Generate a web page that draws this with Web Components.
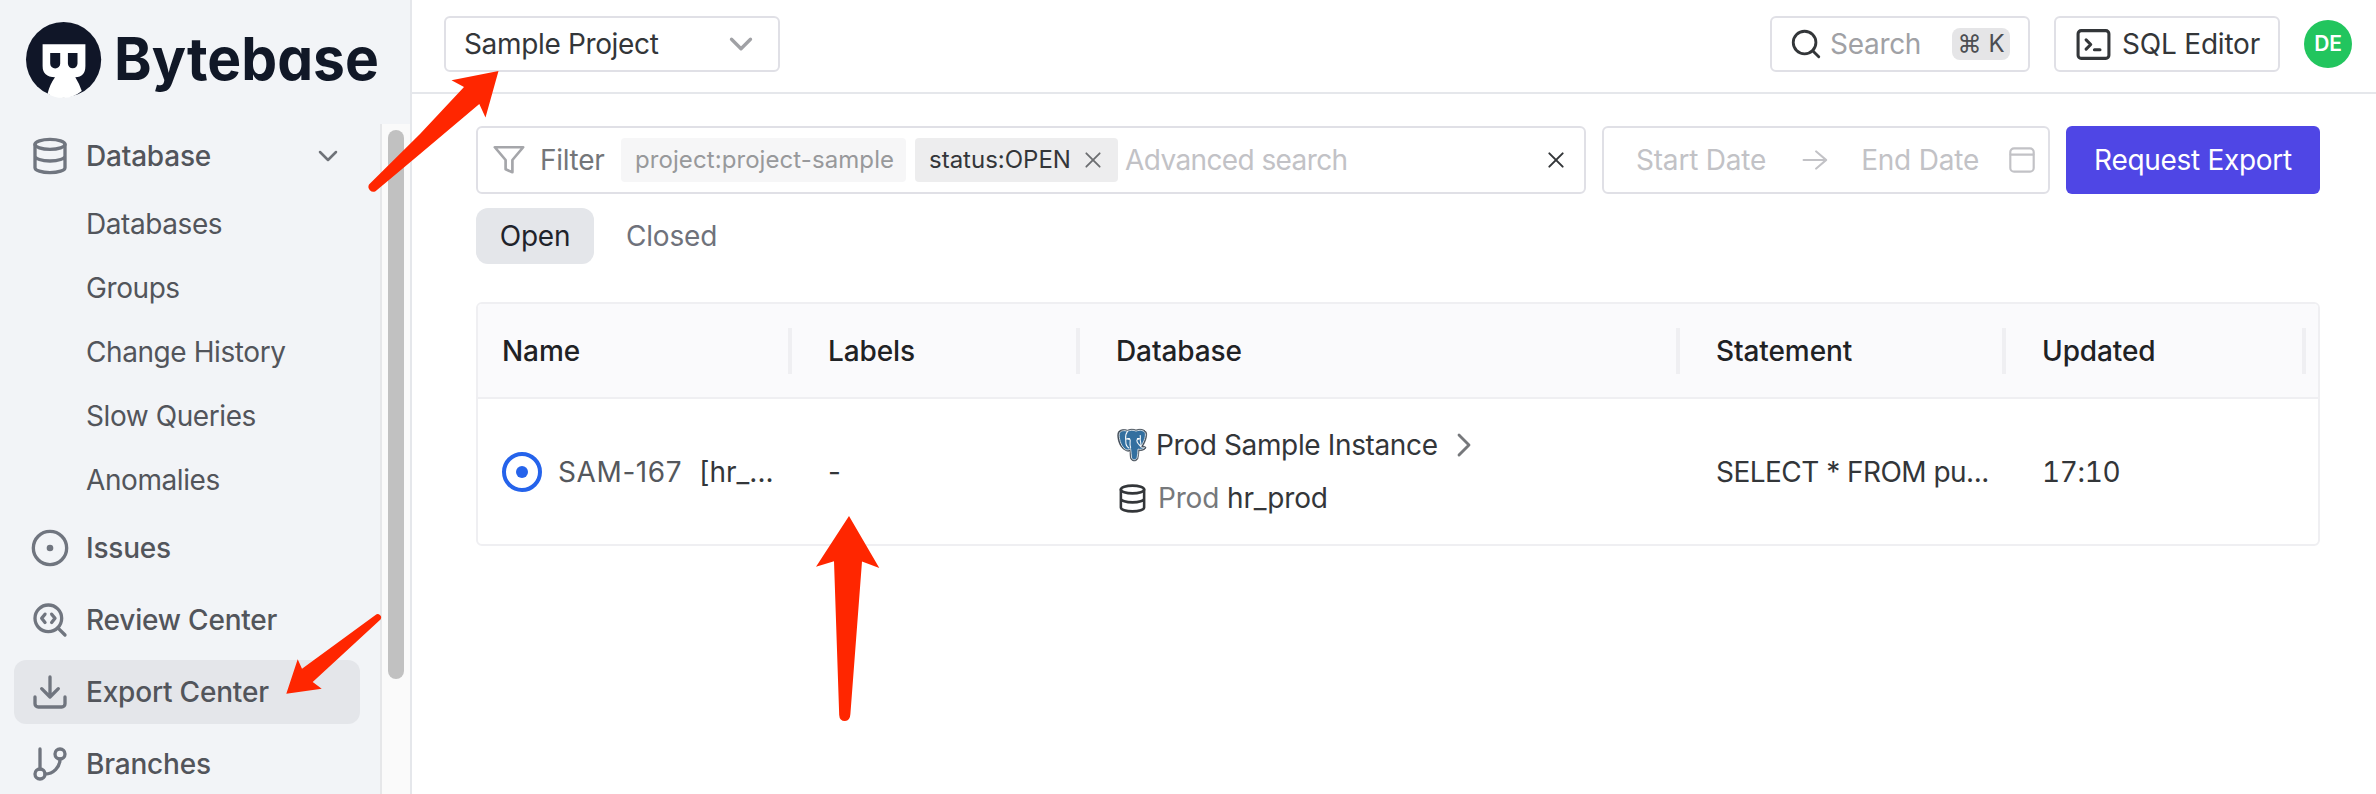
<!DOCTYPE html>
<html lang="en">
<head>
<meta charset="utf-8">
<title>Export Center</title>
<style>
html,body{margin:0;height:100%;overflow:hidden;background:#fff}
body{font-family:Inter,"Liberation Sans",sans-serif;font-size:28px;line-height:40px;color:#333639;letter-spacing:-.2px}
</style>
</head>
<body>
<bb-app></bb-app>
<script>
const define = (name, css, html) => customElements.define(name, class extends HTMLElement {
  connectedCallback() {
    if (this.shadowRoot) return;
    const t = document.createElement('template');
    t.innerHTML = `<style>*{box-sizing:border-box}:host{box-sizing:border-box}${css}</style>${typeof html === 'function' ? html(this) : html}`;
    this.attachShadow({ mode: 'open' }).append(t.content.cloneNode(true));
  }
});

const ICONS = {
  database: '<ellipse cx="12" cy="5" rx="9" ry="3"/><path d="M3 5v14a9 3 0 0 0 18 0V5M3 12a9 3 0 0 0 18 0"/>',
  down: '<path d="m6 9 6 6 6-6"/>',
  right: '<path d="m9 18 6-6-6-6"/>',
  issue: '<circle cx="12" cy="12" r="10"/><circle cx="12" cy="12" r="1"/>',
  review: '<path d="m13 13.5 2-2.5-2-2.5M21 21l-4.3-4.3M9 8.5 7 11l2 2.5"/><circle cx="11" cy="11" r="8"/>',
  download: '<path d="M21 15v4a2 2 0 0 1-2 2H5a2 2 0 0 1-2-2v-4M7 10l5 5 5-5M12 15V3"/>',
  branch: '<path d="M6 3v12"/><circle cx="18" cy="6" r="3"/><circle cx="6" cy="18" r="3"/><path d="M18 9a9 9 0 0 1-9 9"/>',
  search: '<circle cx="11" cy="11" r="8"/><path d="m21 21-4.3-4.3"/>',
  terminal: '<rect x="2" y="3" width="20" height="18" rx="2"/><path d="m7.2 9 3 3-3 3M12.6 15.4h3.6"/>',
  funnel: '<path d="M2 3h20l-7.6 9v8.6l-4.8-2V12z"/>',
  close: '<path d="M4 4l16 16M20 4L4 20"/>',
  arrow: '<path d="M1.5 12h20.5M13 2.5 22.3 12 13 21.5"/>',
  calendar: '<rect x="1.2" y="1.2" width="21.6" height="21.6" rx="3.5"/><path d="M1.5 7h21"/>'
};
define('bb-icon', `:host{display:block;flex:none}svg{display:block;fill:none;stroke:currentColor;stroke-linecap:round;stroke-linejoin:round}`,
  el => `<svg width="${el.getAttribute('w')}" height="${el.getAttribute('h') || el.getAttribute('w')}" viewBox="0 0 24 24" preserveAspectRatio="none" stroke-width="${el.getAttribute('sw') || 2}">${ICONS[el.getAttribute('name')]}</svg>`);

define('bb-logo', `
:host{display:flex;align-items:center;height:124px;padding:0 0 4px 24px;flex:none}
svg{display:block;overflow:visible}
text{font-family:Inter,sans-serif;font-weight:700;font-size:59px;letter-spacing:0;font-feature-settings:"cv11" 1;fill:#111827}`,
`<svg width="360" height="80" viewBox="0 0 360 80">
<circle cx="39.6" cy="39.6" r="37.6" fill="#101628"/>
<path d="M18.6 24.2H61.4V46Q61.4 57 51.3 57.2Q55 63 57.8 71Q49 78 39.6 77.8Q30 78 23.6 73.4Q26 64 31 57.2Q18.6 57 18.6 46Z" fill="#fff"/>
<path d="M26.2 33h10v10.500a5 5 0 0 1-10 0zM43.900 33h9.600v10.500a4.800 4.800 0 0 1-9.600 0z" fill="#101628"/>
<text x="90" y="60" textLength="265" lengthAdjust="spacingAndGlyphs">Bytebase</text></svg>`);

define('bb-nav-item', `
:host{display:flex;align-items:center;height:64px;padding:0 16px;border-radius:12px;font-weight:500;color:#52555b;flex:none}
:host([active]){background:#e4e6ea}
:host([sub]){font-weight:400;padding-left:72px;letter-spacing:-.42px}
.ic{color:#70757f;margin-right:16px}
.label{flex:1}
.chev{color:#6f7278}`,
el => `${el.hasAttribute('icon') ? `<bb-icon class="ic" name="${el.getAttribute('icon')}" w="40"></bb-icon>` : ''}<span class="label"><slot></slot></span>${el.hasAttribute('open') ? '<bb-icon class="chev" name="down" w="32" sw="1.9"></bb-icon>' : ''}`);

define('bb-sidebar', `
:host{display:flex;flex-direction:column;width:412px;height:794px;background:#f2f4f7;border-right:2px solid #e5e7eb;overflow:hidden;flex:none}
.body{display:flex;flex:1;min-height:0}
nav{flex:1;display:flex;flex-direction:column;gap:8px;padding:0 20px 0 14px;overflow:hidden}
.group{display:flex;flex-direction:column;padding-bottom:0;margin-bottom:-4px}
.subs{display:flex;flex-direction:column;margin-top:4px}
.track{width:30px;background:#fafafa;border-left:2px solid #e6e7e9;padding:6px 6px 0}
.thumb{width:16px;height:549px;border-radius:8px;background:#c1c1c1}`,
`<bb-logo></bb-logo><div class="body"><nav>
<div class="group"><bb-nav-item icon="database" open>Database</bb-nav-item>
<div class="subs"><bb-nav-item sub>Databases</bb-nav-item><bb-nav-item sub>Groups</bb-nav-item><bb-nav-item sub>Change History</bb-nav-item><bb-nav-item sub>Slow Queries</bb-nav-item><bb-nav-item sub>Anomalies</bb-nav-item></div></div>
<bb-nav-item icon="issue">Issues</bb-nav-item>
<bb-nav-item icon="review">Review Center</bb-nav-item>
<bb-nav-item icon="download" active>Export Center</bb-nav-item>
<bb-nav-item icon="branch">Branches</bb-nav-item>
</nav><div class="track"><div class="thumb"></div></div></div>`);

define('bb-topbar', `
:host{display:flex;align-items:center;height:94px;padding:0 24px 4px 32px;border-bottom:2px solid #e5e7eb;flex:none}
.box{display:flex;align-items:center;height:56px;border:2px solid #e0e0e6;border-radius:6px}
.select{width:336px;padding:0 18px;justify-content:space-between;letter-spacing:-.35px}
.select bb-icon{color:#a0a1a5}
.space{flex:1}
.search{width:260px;padding:0 18px 0 17px;margin-right:24px}
.search .t{color:#a0a1a5;flex:1;margin-left:7px;letter-spacing:-.3px}
kbd{display:flex;align-items:center;justify-content:center;gap:7px;width:58px;height:32px;border-radius:8px;background:#e5e5e7;font:400 24px/32px Inter,sans-serif;color:#4c4e52}
.sql{width:226px;padding:0 0 0 19px;gap:10px;margin-right:24px}
.av{width:48px;height:48px;border-radius:50%;background:#22c55e;color:#fff;font-size:21px;font-weight:600;display:flex;align-items:center;justify-content:center}`,
`<div class="box select"><span>Sample Project</span><bb-icon name="down" w="38" sw="2.1"></bb-icon></div>
<div class="space"></div>
<div class="box search"><bb-icon name="search" w="34" sw="2"></bb-icon><span class="t">Search</span><kbd><span>⌘</span><span>K</span></kbd></div>
<div class="box sql"><bb-icon name="terminal" w="37" sw="2"></bb-icon><span>SQL Editor</span></div>
<div class="av">DE</div>`);

define('bb-tag', `
:host{display:flex;align-items:center;height:44px;padding:0 14px;border-radius:4px;background:#ededee;font-size:24px;gap:12px;color:#333639;flex:none;white-space:nowrap;letter-spacing:0}
:host([muted]){background:#f6f6f7;color:#98999b;letter-spacing:.08px}
bb-icon{color:#6c6e71}`,
el => `<span><slot></slot></span>${el.hasAttribute('closable') ? '<bb-icon name="close" w="20" sw="2.2"></bb-icon>' : ''}`);

define('bb-filterbar', `
:host{display:flex;gap:16px;height:68px}
.box{display:flex;align-items:center;border:2px solid #e0e0e6;border-radius:6px}
.filter{width:1110px;padding:0 18px 0 14px}
.f{color:#a5a6aa;margin-right:14px}
.ft{color:#747679;width:81px;flex:none;letter-spacing:-.3px}
.ft+bb-tag{width:285px}
bb-tag+bb-tag{width:203px;margin:0 7px 0 9px}
.ph{color:#c2c2c6;flex:1;letter-spacing:-.6px}
.date{width:448px;padding:0 13px 0 32px;color:#c2c2c6;letter-spacing:-.2px}
.date .a{margin:0 33px 0 36px}
.date .c{margin-left:auto}
button{width:254px;border:0;border-radius:6px;background:#4f46e5;color:#fff;font:400 28px Inter,sans-serif;letter-spacing:-.3px;padding:0}`,
`<div class="box filter"><bb-icon class="f" name="funnel" w="34" h="34" sw="1.9"></bb-icon><span class="ft">Filter</span><bb-tag muted>project:project-sample</bb-tag><bb-tag closable>status:OPEN</bb-tag><span class="ph">Advanced search</span><bb-icon name="close" w="20" sw="2.4"></bb-icon></div>
<div class="box date"><span>Start Date</span><bb-icon class="a" name="arrow" w="26" h="22" sw="2"></bb-icon><span>End Date</span><bb-icon class="c" name="calendar" w="26" sw="2"></bb-icon></div>
<button>Request Export</button>`);

define('bb-tabs', `
:host{display:flex;height:56px;margin-top:14px;line-height:56px}
span{padding:0 24px;color:#6f727b;font-weight:400}
.on{background:#e4e6ea;border-radius:12px;color:#1f232b;width:118px;margin-right:8px;padding:0;text-align:center}`,
`<span class="on">Open</span><span>Closed</span>`);

define('bb-pg-icon', `:host{display:block;flex:none}svg{display:block}`,
`<svg width="32" height="34" viewBox="0 0 32 34" stroke-linecap="round" stroke-linejoin="round">
<path d="M7 20.5C3 18 1 9 2 5C3 1.500 8 1 11.500 2.200C14 1 17.500 1 20 2C24 .6 29.500 1.300 30.500 5C31.300 9 28.500 15.500 26.500 18.500C28.500 18.500 30.300 18.600 29.900 20C28.800 22 25.500 22.700 23 22.600C22.500 25 22.600 28 21.900 30.500C20.800 33.500 15.800 33.800 14.600 30.500C14 28 14.100 25.500 14 22.500C12.500 24.500 8.500 22 7 20.500Z" fill="#3b4550" stroke="#3b4550" stroke-width=".7"/>
<path d="M8 20.200C5 18 2.600 9.500 3.300 5.800C4 2.500 8.500 2 11.400 3.300C14 2 17.800 2 20 3.100C24 1.600 28.600 2.300 29.300 5.600C30 9 27 15.500 24.800 18.700C24.900 20 27 19.500 28.600 19.700C27 21.300 24 21.700 22 21.100C21.700 24.500 21.800 27.500 21 30.100C20 32 16.500 32.300 15.600 30C15 27 15.400 23.500 14.600 20.500C12.500 23 9.500 22 8 20.200Z" fill="#336f9f" stroke="#dfe6eb" stroke-width=".9"/>
<path d="M11.500 3.300C8.500 7 9.800 10 9.800 13.500C9.700 16.500 11 18.800 12.900 20M10 11.300C12 10 14 10.300 14.200 12.300C14.300 14.500 13.400 16.500 14.600 19.500M24.200 7.500C24.600 9 24.300 10 24.200 11.500C24.500 14.500 25.500 16.500 24.800 18.600M24.100 10.800C21.500 10.300 20.300 12 21.200 14C22 16 24 17.500 24.800 18.600" fill="none" stroke="#f2f6f9" stroke-width="1.100"/>
<path d="M12 10.900h1.400M21.600 10.700h1.200" stroke="#fff" stroke-width="1.500"/>
</svg>`);

define('bb-table', `
:host{display:block;margin-top:38px;border:2px solid #efeff2;border-radius:6px;overflow:hidden;height:244px}
.row{display:grid;grid-template-columns:326px 288px 600px 326px 300px;align-items:center}
.row>div{padding:0 24px;white-space:nowrap}
.head{height:95px;background:#fafafc;border-bottom:2px solid #efeff2;font-weight:500;color:#1f2225;letter-spacing:-.1px}
.row.head>div{display:flex;justify-content:space-between;align-items:center;padding-right:12px}
.head>div::after{content:"";width:4px;height:46px;background:#efeff2;flex:none}
.body{height:145px}
.name{display:flex;align-items:center;letter-spacing:0}
.ring{width:40px;height:40px;border:4px solid #2563eb;border-radius:50%;display:grid;place-items:center;margin-right:16px;flex:none}
.ring i{width:12px;height:12px;border-radius:50%;background:#2563eb}
.id{color:#55585d;margin-right:17px;letter-spacing:.6px}
.l{display:flex;align-items:center;height:53px}
.l bb-pg-icon{margin-right:8px}
.l bb-icon.r{margin-left:6px;color:#76787b}
.l bb-icon.d{margin:0 10px 0 1px}
.l .g{color:#76787b;margin-right:8px}
.inst{letter-spacing:-.36px}
.stmt{letter-spacing:-.53px}
.time{font-variant-numeric:tabular-nums;letter-spacing:-.4px}`,
`<div class="row head"><div>Name</div><div>Labels</div><div>Database</div><div>Statement</div><div>Updated</div></div>
<div class="row body"><div class="name"><span class="ring"><i></i></span><span class="id">SAM-167</span><span>[hr_...</span></div>
<div>-</div>
<div class="db"><div class="l"><bb-pg-icon></bb-pg-icon><span class="inst">Prod Sample Instance</span><bb-icon class="r" name="right" w="40" sw="1.7"></bb-icon></div>
<div class="l"><bb-icon class="d" name="database" w="31" sw="2"></bb-icon><span class="g">Prod</span><span>hr_prod</span></div></div>
<div class="stmt">SELECT * FROM pu...</div><div class="time">17:10</div></div>`);

define('bb-arrows', `:host{position:absolute;inset:0;pointer-events:none}svg{display:block}`,
`<svg width="2376" height="794" viewBox="0 0 2376 794" fill="#ff2600">
<path d="M498.500 71L451.500 80.300L464 87L420 134L369 184.500A5 5 0 0 0 375.500 191.300L420 154L479.300 104L485.500 117.500Z"/>
<path d="M286.300 693.700L297.700 659.300L302 668.700L375.500 615A3.400 3.400 0 0 1 380.500 619.500L312.700 682L321.700 688.700Z"/>
<path d="M849 516L816 566.700L834 561.300L839.200 715Q839.500 721 845 721Q850 721 850.400 714L862 561.500L879.300 568Z"/>
</svg>`);

define('bb-app', `
:host{display:flex;position:relative;width:2376px;height:794px;background:#fff;overflow:hidden}
main{flex:1;display:flex;flex-direction:column;min-width:0}
section{padding:32px 56px 0 64px}`,
`<bb-sidebar></bb-sidebar><main><bb-topbar></bb-topbar><section><bb-filterbar></bb-filterbar><bb-tabs></bb-tabs><bb-table></bb-table></section></main><bb-arrows></bb-arrows>`);
</script>
</body>
</html>
